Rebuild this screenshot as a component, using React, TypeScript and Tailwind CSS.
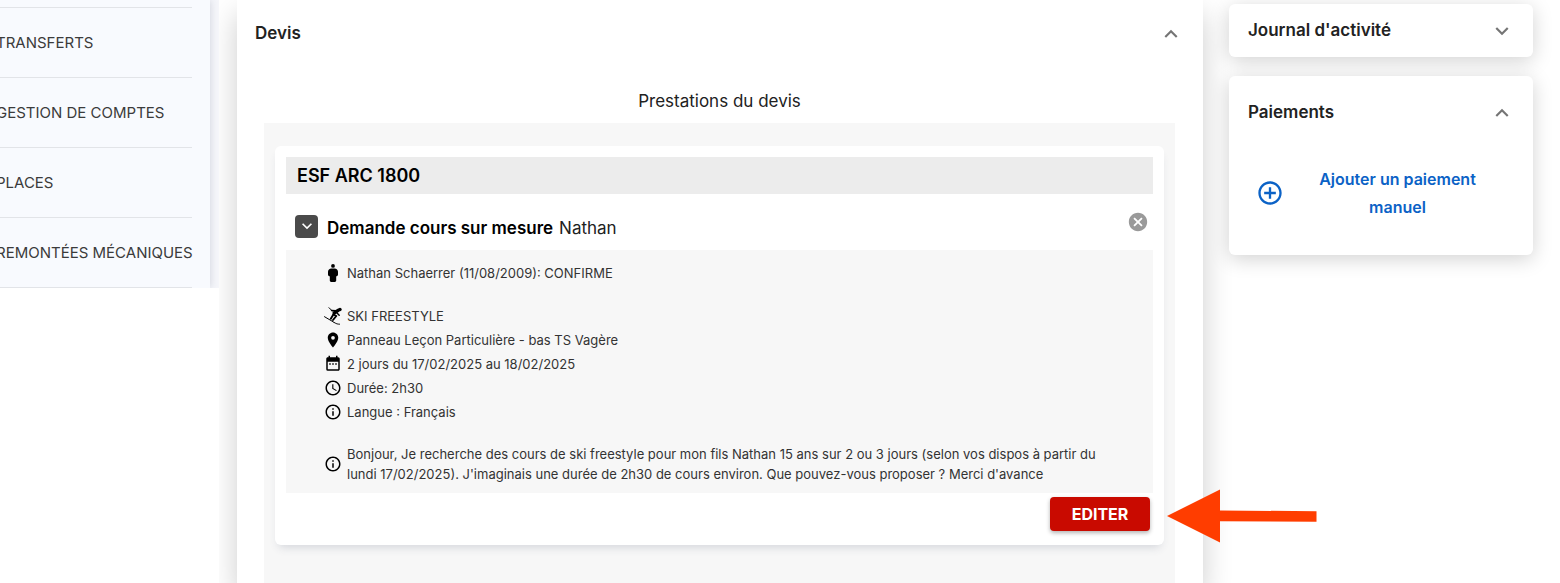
import React from "react";
import {
  MdAccessTime,
  MdAddCircleOutline,
  MdCancel,
  MdExpandLess,
  MdExpandMore,
  MdInfoOutline,
  MdLocationOn,
} from "react-icons/md";

const menuItems = ["TRANSFERTS", "GESTION DE COMPTES", "PLACES", "REMONTÉES MÉCANIQUES"];

const PersonIcon = () => (
  <svg viewBox="0 0 18 18" className="size-[18px]" fill="currentColor" aria-hidden="true">
    <circle cx="9" cy="1.9" r="1.9" />
    <path d="M7.300 4.400h3.400c1.800 0 3.300 1.500 3.300 3.300v2.800c0 1-.8 1.800-1.800 1.800v4.300c0 .8-.6 1.400-1.400 1.400H7.200c-.8 0-1.400-.6-1.400-1.400v-4.300c-1 0-1.800-.8-1.800-1.800V7.700c0-1.800 1.500-3.300 3.300-3.300z" />
  </svg>
);

const SkierIcon = () => (
  <svg viewBox="0 0 18 18" className="size-[18px]" fill="none" stroke="currentColor" strokeLinecap="round" strokeLinejoin="round" aria-hidden="true">
    <path d="M5 .7 8.500 4.200M.5 9.700l8.300 4.900M9.300 15l2 1.100c1 .6 2.500 1.100 4.200 1.100" strokeWidth="1" />
    <path d="M14.500 3.200 10.200 6" strokeWidth="3.400" />
    <path d="M9.500 7.500 12.300 9 9 13" strokeWidth="1.900" />
    <path d="M9.800 6.800 6.800 11.800" strokeWidth="1.900" />
    <path d="M12 3.800 7.500 3.500M13 6l2.200 2.300" strokeWidth="1.400" />
    <circle cx="16" cy="2.500" r="1.700" fill="currentColor" stroke="none" />
  </svg>
);

const CalendarIcon = () => (
  <svg viewBox="0 0 24 24" className="size-[18px]" fill="currentColor" aria-hidden="true">
    <path d="M7 11h2v2H7v-2m14-6v14c0 1.110-.89 2-2 2H5a2 2 0 0 1-2-2V5c0-1.100.9-2 2-2h1V1h2v2h8V1h2v2h1a2 2 0 0 1 2 2M5 19h14V9H5v10m10-6v-2h2v2h-2m-4 0v-2h2v2h-2z" />
  </svg>
);

interface DetailProps {
  icon: React.ReactNode;
  children: React.ReactNode;
}

const Detail: React.FC<DetailProps> = ({ icon, children }) => (
  <li className="flex items-center gap-[5px]">
    <span className="flex w-[18px] shrink-0 justify-center text-black">{icon}</span>
    <span className="min-h-6 leading-6">{children}</span>
  </li>
);

const Sidebar: React.FC = () => (
  <div className="relative z-10 w-[219px] shrink-0 bg-white">
    <div className="overflow-hidden bg-[#f5f6fa]">
      <nav className="mr-[9px] bg-[#f8fafe] pt-[7px] shadow-[0_0_8px_rgba(60,70,100,0.2)]">
        <ul className="-ml-1 mr-[18px] border-t border-[#e2e4e8] text-[15px] text-[#3b3b3b]">
          {menuItems.map((item) => (
            <li key={item} className="border-b border-[#e2e4e8]">
              <a href="#" className="flex h-[69px] items-center pt-[2px] whitespace-nowrap">
                {item}
              </a>
            </li>
          ))}
        </ul>
      </nav>
    </div>
  </div>
);

const RequestCard: React.FC = () => (
  <article className="rounded-md bg-white px-[11px] pt-[11px] pb-[14px] shadow-[0_6px_10px_-4px_rgba(60,70,100,0.2)]">
    <h3 className="bg-[#ececec] px-[11px] text-lg leading-[37px] font-semibold text-black">ESF ARC 1800</h3>
    <div className="flex h-14 items-center pt-2 pr-1 pl-[9px]">
      <button type="button" aria-label="Réduire" className="flex size-[23px] items-center justify-center rounded-sm bg-[#4a4a4a] text-white">
        <MdExpandMore className="size-5" />
      </button>
      <p className="ml-[9px] pt-1 text-[17px] leading-6 text-[#212121]">
        <span className="mr-[6px] font-semibold text-black">Demande cours sur mesure</span>
        Nathan
      </p>
      <button type="button" aria-label="Supprimer" className="mb-2 ml-auto text-[#9a9a9a]">
        <MdCancel className="size-[22px]" />
      </button>
    </div>
    <div className="bg-[#f7f7f7] pt-[11px] pr-8 pb-[9px] pl-[38px] text-[13px] text-[#333]">
      <ul>
        <Detail icon={<PersonIcon />}>Nathan Schaerrer (11/08/2009): CONFIRME</Detail>
      </ul>
      <ul className="mt-[19px]">
        <Detail icon={<SkierIcon />}>SKI FREESTYLE</Detail>
        <Detail icon={<MdLocationOn className="size-[18px]" />}>Panneau Leçon Particulière - bas TS Vagère</Detail>
        <Detail icon={<CalendarIcon />}>2 jours du 17/02/2025 au 18/02/2025</Detail>
        <Detail icon={<MdAccessTime className="size-[18px]" />}>Durée: 2h30</Detail>
        <Detail icon={<MdInfoOutline className="size-[18px]" />}>Langue : Français</Detail>
      </ul>
      <div className="mt-5 flex items-center gap-[5px]">
        <MdInfoOutline className="size-[18px] shrink-0 text-black" />
        <p className="leading-5">
          Bonjour, Je recherche des cours de ski freestyle pour mon fils Nathan 15 ans sur 2 ou 3 jours (selon vos dispos à partir du
          lundi 17/02/2025). J'imaginais une durée de 2h30 de cours environ. Que pouvez-vous proposer ? Merci d'avance
        </p>
      </div>
    </div>
    <div className="mt-1 flex justify-end pr-[3px]">
      <div className="relative">
        <button type="button" className="h-[34px] w-[100px] rounded bg-[#c90a00] text-base font-bold text-white shadow-[0_2px_4px_rgba(0,0,0,0.3)]">
          EDITER
        </button>
        {/* Callout arrow */}
        <svg viewBox="0 0 150 54" className="absolute top-1/2 left-full z-20 mt-[-25px] ml-[17px] h-[54px] w-[150px]" fill="#ff3d00" aria-hidden="true">
          <path d="M0 27 53 .5V21.500L149.500 22.200v10.600L53 32.200V53.500z" />
        </svg>
      </div>
    </div>
  </article>
);

const QuotePanel: React.FC = () => (
  <main className="ml-[18px] flex min-w-0 flex-1 flex-col bg-white pr-7 pl-[27px] shadow-[0_14px_28px_rgba(0,0,0,0.2)]">
    <header className="-mx-[9px] flex h-[67px] items-center justify-between pt-px">
      <h2 className="text-[17px] font-semibold text-[#222]">Devis</h2>
      <button type="button" aria-label="Replier le devis" className="text-[#757575]">
        <MdExpandLess className="size-[26px]" />
      </button>
    </header>
    <p className="pt-[22px] pb-[10px] text-center text-[17px] leading-6 text-[#212121]">Prestations du devis</p>
    <section className="flex-1 bg-[#f7f7f7] px-[11px] pt-[23px] pb-[38px]">
      <RequestCard />
    </section>
  </main>
);

const SidePanels: React.FC = () => (
  <aside className="mr-[27px] ml-[26px] flex w-[304px] shrink-0 flex-col gap-[19px] pt-1">
    <section className="flex h-[53px] items-center justify-between rounded-md bg-white pt-px pr-[18px] pl-[19px] shadow-[0_4px_20px_rgba(0,0,0,0.18)]">
      <h2 className="text-[17px] font-semibold text-[#222]">Journal d'activité</h2>
      <button type="button" aria-label="Ouvrir le journal" className="text-[#757575]">
        <MdExpandMore className="size-[26px]" />
      </button>
    </section>
    <section className="rounded-md bg-white pr-[18px] pb-[34px] pl-[19px] shadow-[0_4px_20px_rgba(0,0,0,0.18)]">
      <header className="flex h-[72px] items-center justify-between pt-px">
        <h2 className="text-[17px] font-semibold text-[#222]">Paiements</h2>
        <button type="button" aria-label="Replier les paiements" className="text-[#757575]">
          <MdExpandLess className="size-[26px]" />
        </button>
      </header>
      <button type="button" className="mt-[17px] flex w-full items-center pr-8 pl-2 text-base leading-7 font-semibold text-[#0b62c6]">
        <MdAddCircleOutline className="size-7 shrink-0" />
        <span className="ml-7 flex-1">Ajouter un paiement manuel</span>
      </button>
    </section>
  </aside>
);

const App: React.FC = () => {
  return (
    <div className="flex min-h-screen overflow-hidden bg-white font-['Inter',sans-serif]">
      <Sidebar />
      <QuotePanel />
      <SidePanels />
    </div>
  );
};

export default App;
